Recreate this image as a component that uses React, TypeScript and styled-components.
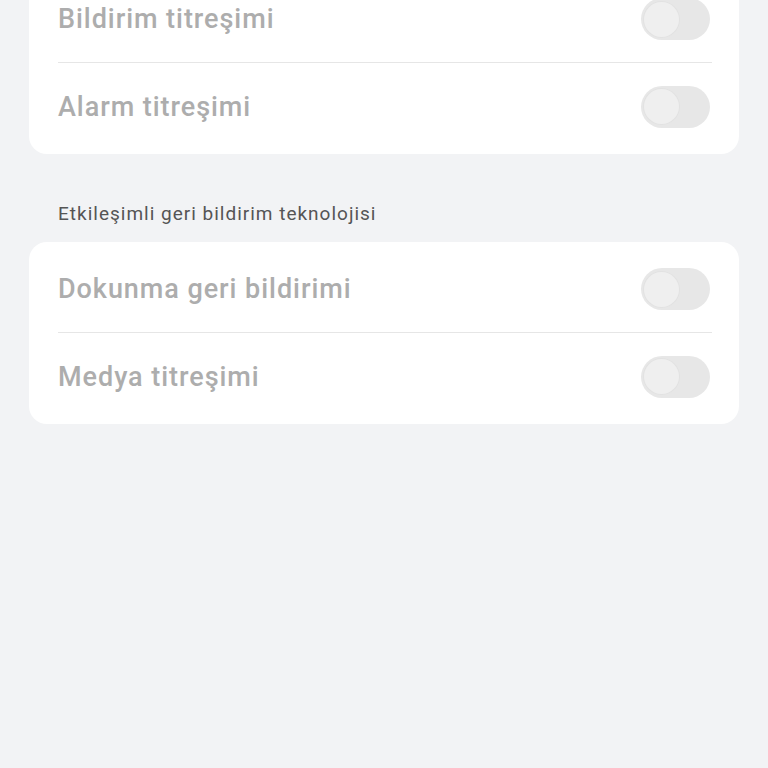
import React from "react";
import styled, { createGlobalStyle } from "styled-components";

const Global = createGlobalStyle`
  html, body { margin: 0; padding: 0; background: #f2f3f5; }
  body { font-family: Roboto, "Noto Sans", sans-serif; }
`;

const Page = styled.div`
  width: 768px;
  height: 768px;
  overflow: hidden;
  background: #f2f3f5;
`;

const Content = styled.div`
  display: flex;
  flex-direction: column;
  padding: 0 29px;
  margin-top: -28px;
`;

const Card = styled.div`
  background: #ffffff;
  border-radius: 18px;
  padding: 4px 27px 4px 29px;
  display: flex;
  flex-direction: column;
`;

const Row = styled.div<{ $divider?: boolean }>`
  height: 87px;
  box-sizing: border-box;
  display: flex;
  align-items: center;
  justify-content: space-between;
  border-bottom: ${(p) => (p.$divider ? "1px solid #e6e6e6" : "none")};
`;

const Label = styled.span`
  font-size: 27px;
  font-weight: 500;
  color: #adadad;
  letter-spacing: 0.95px;
`;

const Track = styled.div`
  width: 69px;
  height: 42px;
  border-radius: 21px;
  background: #e7e7e7;
  margin-right: 2px;
  display: flex;
  align-items: center;
  padding-left: 3px;
  box-sizing: border-box;
`;

const Knob = styled.div`
  width: 35px;
  height: 35px;
  border-radius: 50%;
  background: #efefef;
  box-shadow: 0 0 0 1px #e2e2e2;
`;

const SectionTitle = styled.div`
  font-size: 19px;
  line-height: 24px;
  color: #555555;
  letter-spacing: 1px;
  padding-left: 29px;
  margin: 48px 0 16px;
`;

const Toggle = () => (
  <Track>
    <Knob />
  </Track>
);

const Section = ({ items }: { items: string[] }) => (
  <Card>
    {items.map((t, i) => (
      <Row key={t} $divider={i < items.length - 1}>
        <Label>{t}</Label>
        <Toggle />
      </Row>
    ))}
  </Card>
);

export default function App() {
  return (
    <Page>
      <Global />
      <Content>
        <Section items={["Bildirim titreşimi", "Alarm titreşimi"]} />
        <SectionTitle>Etkileşimli geri bildirim teknolojisi</SectionTitle>
        <Section items={["Dokunma geri bildirimi", "Medya titreşimi"]} />
      </Content>
    </Page>
  );
}
